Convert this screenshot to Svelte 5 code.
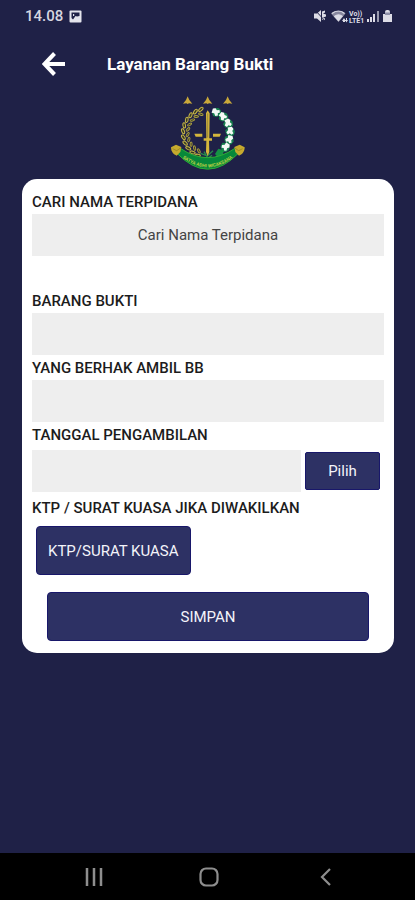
<script lang="ts">
	let nama = $state('');
	let barangBukti = $state('');
	let penerima = $state('');
	let tanggal = $state('');

	// both wreaths of the emblem follow the same circle
	const cx = 143;
	const cy = 131;

	function around(from: number, to: number, count: number, radius: number) {
		return Array.from({ length: count }, (_, i) => {
			const deg = from + ((to - from) * i) / (count - 1);
			const rad = (deg * Math.PI) / 180;
			return { deg, x: cx + radius * Math.cos(rad), y: cy + radius * Math.sin(rad) };
		});
	}

	const outerGrains = around(114, 254, 11, 74);
	const innerGrains = around(116, 250, 10, 60);
	const cotton = around(-68, 38, 6, 68);
	const stars = [83, 143, 203];
</script>

<svelte:head>
	<title>Layanan Barang Bukti</title>
</svelte:head>

<div class="screen">
	<div class="status">
		<span class="time">14.08</span>
		<svg class="picture" width="13" height="13" viewBox="0 0 13 13">
			<rect x="0.5" y="0.5" width="12" height="12" rx="1" fill="#e4e4ec" />
			<path d="M2.500 8V2.500h8V6L8 6.500 6.500 6 4 9.500z" fill="#1f2147" />
			<path d="M4 6V4h1.200v2z" fill="#e4e4ec" />
		</svg>
		<svg class="signals" width="80" height="16" viewBox="0 0 80 16">
			<g fill="#dcdce6">
				<path d="M1 5.500h3L8 2v12l-4-3.500H1z" />
				<path d="M9 3.500l3-1v2l-2 1 3 1v2l-3 1 2 1v2l-3-1z" />
				<path d="M18 5.500c4-4 11-4 14.500 0L25.500 14z" opacity="0.55" />
				<path d="M21 8.500c2.500-2 6-2 8.500 0L25.500 13.500z" />
				<path d="M30 13h-1l2-3 2 3h-1v1h-2zM33 10h1v2h1l-1.500 2.500-1.500-2.500h1z" />
				<path d="M54 11h2v3h-2zM57 9h2v5h-2zM60 6h2v8h-2z" />
				<path d="M64 3h2v11h-2z" opacity="0.65" />
				<path d="M70 6h2V4q0-2 2-2h1q2 0 2 2v2h2v8h-9z" />
			</g>
			<path d="M19 5.500c4-3 9-3 12.500 0M21.500 8.500c2.500-2 5.500-2 8 0" fill="none" stroke="#dcdce6" stroke-width="1.200" />
			<path d="M2 2l11 12" stroke="#1f2147" />
			<text x="36" y="8">Vo))</text>
			<text x="36" y="15">LTE1</text>
			<path d="M72 4.500h5v2.500h-5z" fill="#8d8fa8" />
		</svg>
	</div>

	<header>
		<button class="back" aria-label="Kembali">
			<svg width="24" height="24" viewBox="0 0 24 24">
				<path d="M23 12H3M12.500 1.500L2.500 12l10 10.500" fill="none" stroke="#fff" stroke-width="4" />
			</svg>
		</button>
		<h1>Layanan Barang Bukti</h1>
	</header>

	<main>
		<svg class="emblem" width="76" height="78" viewBox="30 20 228 234" role="img" aria-label="Lambang Kejaksaan">
			{#each stars as x}
				<path d="M{x} 21l5 11 9 11-10-1-4 2-4-2-10 1 9-11z" fill="#c9a83a" />
			{/each}

			<path d="M121 197C79 184 62 143 72 108 80 84 97 68 126 63" fill="none" stroke="#8f8935" stroke-width="2" />
			{#each outerGrains as g}
				<ellipse cx={g.x} cy={g.y} rx="8" ry="4" transform="rotate({g.deg + 65} {g.x} {g.y})" fill="#35391f" stroke="#c4b34a" stroke-width="3" />
			{/each}
			{#each innerGrains as g}
				<ellipse cx={g.x} cy={g.y} rx="7" ry="3" transform="rotate({g.deg + 125} {g.x} {g.y})" fill="#35391f" stroke="#a99d43" stroke-width="3" />
			{/each}

			<path d="M160 66c25 4 45 22 51 48 6 32-7 62-34 79" fill="none" stroke="#167a4d" stroke-width="8" />
			{#each cotton as c}
				<g transform="translate({c.x} {c.y}) rotate({c.deg + 90})">
					<path d="M-12 4l4-14 10-4 10 4 4 10-8 13-12 2z" fill="#17804f" />
					<path d="M-13-6l7-4 6 4 7-3 4 6-5 5 3 6-7 4-6-6-8 1z" fill="#f4faf6" />
				</g>
			{/each}
			<path d="M165 194l10-16 16 5-2 14-16 7z" fill="#159444" />
			<path d="M122 192l20 8 17-16M132 187l12 20 12-9" fill="none" stroke="#278c4c" stroke-width="4" />

			<path d="M143 63l6 9-1 75h8v7h-9l1 34-5 12-5-12 1-34h-8v-7h8l-1-75z" fill="#d4b63c" />
			<path d="M143 72v73" stroke="#837334" stroke-width="2" />
			<path d="M103 133h24v9h-20zM159 133h24l-4 9h-20z" fill="#d4b63c" />

			<path d="M50 191l11-14q82 56 164 0l11 14q-93 97-186 0z" fill="#07883a" stroke="#2fac36" stroke-width="3" />
			<path d="M33 174l15-8 16 7-3 15-11 11c-9-3-17-12-17-25z" fill="#c6aa2e" />
			<path d="M254 174l-15-8-16 7 3 15 11 11c9-3 17-12 17-25z" fill="#c6aa2e" />
			<path d="M38 178l12 6 12-8M248 178l-12 6-12-8" fill="none" stroke="#8a7a22" stroke-width="2" />
			<path id="motto" d="M58 198q85 72 170 0" fill="none" />
			<text class="motto"><textPath href="#motto" startOffset="50%">SATYA ADHI WICAKSANA</textPath></text>
		</svg>

		<form class="card" onsubmit={(e) => e.preventDefault()}>
			<label for="nama">CARI NAMA TERPIDANA</label>
			<input class="search" id="nama" type="text" placeholder="Cari Nama Terpidana" bind:value={nama} />

			<label for="barang">BARANG BUKTI</label>
			<input id="barang" type="text" bind:value={barangBukti} />

			<label for="penerima">YANG BERHAK AMBIL BB</label>
			<input id="penerima" type="text" bind:value={penerima} />

			<label for="tanggal">TANGGAL PENGAMBILAN</label>
			<div class="date">
				<input id="tanggal" type="text" bind:value={tanggal} />
				<button class="pick" type="button">Pilih</button>
			</div>

			<label for="surat">KTP / SURAT KUASA JIKA DIWAKILKAN</label>
			<button class="upload" id="surat" type="button">KTP/SURAT KUASA</button>

			<button class="save" type="submit">SIMPAN</button>
		</form>
	</main>

	<nav>
		<button aria-label="Aplikasi terbaru">
			<svg width="18" height="20" viewBox="0 0 18 20">
				<path d="M2 1v18M9 1v18M16 1v18" stroke="#8e8e8e" stroke-width="2.500" />
			</svg>
		</button>
		<button aria-label="Beranda">
			<svg width="20" height="20" viewBox="0 0 20 20">
				<rect x="1.500" y="1.500" width="17" height="17" rx="5.500" fill="none" stroke="#8e8e8e" stroke-width="2.200" />
			</svg>
		</button>
		<button aria-label="Kembali ke layar sebelumnya">
			<svg width="20" height="20" viewBox="0 0 20 20">
				<path d="M14 2L6 10l8 8" fill="none" stroke="#8e8e8e" stroke-width="2.200" />
			</svg>
		</button>
	</nav>
</div>

<style>
	:global(body) {
		margin: 0;
		background: #1f2147;
	}

	.screen {
		display: flex;
		flex-direction: column;
		min-height: 100vh;
		background: #1f2147;
		font-family: Roboto, sans-serif;
	}

	svg {
		display: block;
	}

	button {
		padding: 0;
		border: 0;
		background: none;
		color: #f4f4fa;
		font: 15px/20px Roboto, sans-serif;
	}

	.status {
		display: flex;
		align-items: center;
		height: 32px;
		padding: 0 22px 0 25px;
	}

	.time {
		color: #d6d6e0;
		font-size: 15px;
		font-weight: 500;
	}

	.picture {
		margin-left: 6px;
	}

	.signals {
		margin-left: auto;
	}

	.signals text {
		fill: #dcdce6;
		font-size: 7px;
		font-weight: 700;
	}

	header {
		display: flex;
		align-items: center;
		gap: 41px;
		height: 64px;
		padding: 0 42px;
	}

	h1 {
		margin: 0;
		color: #fff;
		font-size: 17px;
		font-weight: 700;
		line-height: 24px;
	}

	main {
		flex: 1;
		padding: 0 21px 24px 22px;
	}

	.emblem {
		margin: 0 auto 5px;
	}

	.motto {
		fill: #b9cf43;
		font-size: 14px;
		font-weight: 700;
		text-anchor: middle;
	}

	.card {
		display: flex;
		flex-direction: column;
		padding: 11px 10px 12px;
		border-radius: 15px;
		background: #fff;
	}

	label {
		color: #1c1c1c;
		font-size: 15px;
		font-weight: 500;
		line-height: 24px;
	}

	input {
		box-sizing: border-box;
		width: 100%;
		min-width: 0;
		height: 42px;
		margin-bottom: 1px;
		padding: 0 12px;
		border: 0;
		border-radius: 0;
		background: #eee;
		color: #333;
		font: 15px/20px Roboto, sans-serif;
	}

	.search {
		margin-bottom: 33px;
		text-align: center;
	}

	.search::placeholder {
		color: #444;
		opacity: 1;
	}

	.date {
		display: flex;
		align-items: center;
		gap: 4px;
		margin: 3px 0 4px;
		padding-right: 4px;
	}

	.date input {
		flex: 1;
		margin: 0;
	}

	.pick,
	.upload,
	.save {
		border: 1px solid #18176a;
		border-radius: 4px;
		background: #2d3164;
	}

	.pick {
		width: 75px;
		height: 38px;
		border-radius: 2px;
	}

	.upload {
		align-self: flex-start;
		height: 49px;
		margin: 6px 4px 17px;
		padding: 0 11px;
	}

	.save {
		height: 49px;
		margin: 0 15px;
	}

	nav {
		display: flex;
		align-items: center;
		justify-content: space-around;
		height: 47px;
		padding: 0 31px 0 37px;
		background: #000;
	}
</style>
